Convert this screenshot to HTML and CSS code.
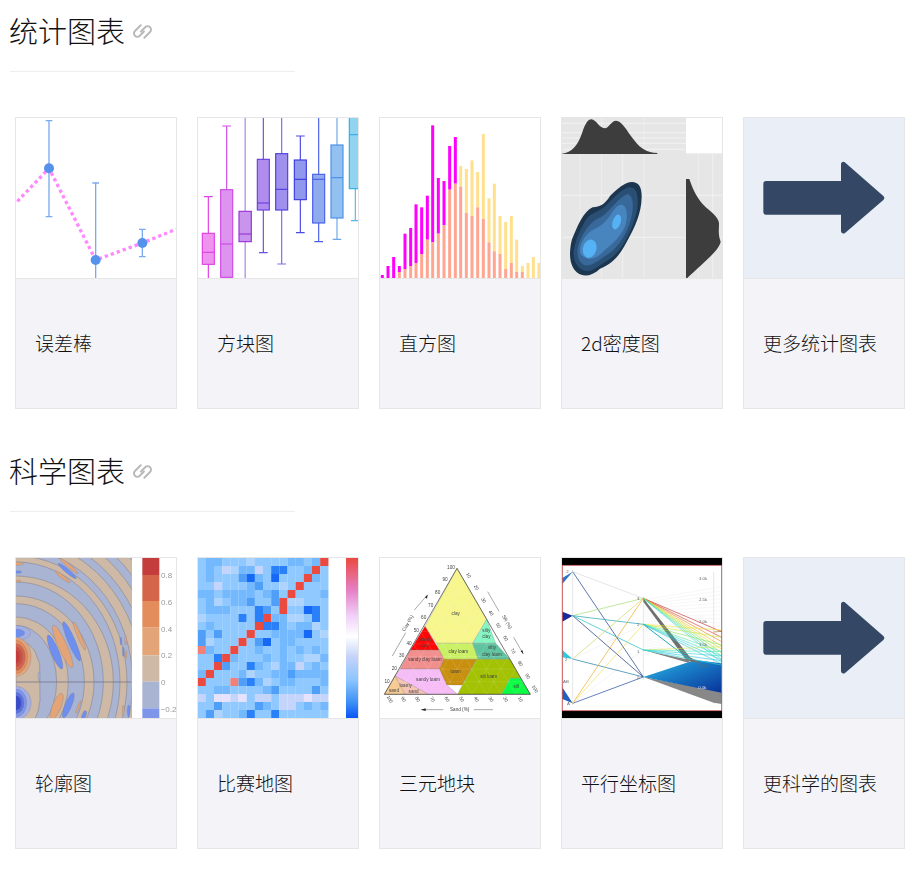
FILE: index.html
```html
<!DOCTYPE html>
<html lang="zh-CN">
<head>
<meta charset="utf-8">
<title>图表</title>
<link rel="stylesheet" href="styles.css">
</head>
<body>
<main class="page">
<section class="section">
  <h2 class="heading"><span class="heading-text">统计图表</span>
    <svg class="link" viewBox="0 0 18 18"><g transform="rotate(-45 9 9)"><path d="M12 3.6H4.3a3.2 3.2 0 0 0 0 6.4H10"/><path d="M8 8H13.7a3.2 3.2 0 0 1 0 6.4H6"/></g></svg>
  </h2>
  <div class="cards">
    <a class="card"><div class="thumb"><svg id="errorbar" viewBox="48 354 480 480">
      <g fill="none" stroke="#7aabf0" stroke-width="4">
        <path d="M147 362V650M137 362H157M137 650H157"/>
        <path d="M287 549V834M277 549H297"/>
        <path d="M427 688V770M417 688H437M417 770H437"/>
      </g>
      <path d="M52 604L147 505L287 780L427 729L528 688" fill="none" stroke="#ff88ff" stroke-width="10" stroke-dasharray="10 9"/>
      <g fill="#5592ec"><circle cx="147" cy="505" r="15"/><circle cx="287" cy="780" r="15"/><circle cx="427" cy="729" r="15"/></g>
    </svg></div><h3 class="label">误差棒</h3></a>
    <a class="card"><div class="thumb"><svg id="boxplot" viewBox="594 354 480 480"></svg></div><h3 class="label">方块图</h3></a>
    <a class="card"><div class="thumb"><svg id="hist" viewBox="30 24 480 480"></svg></div><h3 class="label">直方图</h3></a>
    <a class="card"><div class="thumb"><svg class="soft" viewBox="576 24 480 480">
      <rect x="576" y="24" width="480" height="480" fill="#e6e6e6"/>
      <path d="M576 40H948M576 68H948M576 84H948M576 100H948M576 118H948M576 256H1056M576 382H1056" stroke="#f2f2f2" stroke-width="3"/>
      <path d="M630 130V504M694 24V504M758 130V504M822 24V504M985 130V504M1028 130V504" stroke="#f0f0f0" stroke-width="2.5"/>
      <rect x="948" y="24" width="108" height="106" fill="#fff"/>
      <path d="M576 131C606 128 622 108 636 70C646 40 654 28 664 28C678 28 688 55 704 55C716 55 724 32 738 32C756 32 770 62 792 90C812 116 830 128 862 129V132H576Z" fill="#3d3d3d"/>
      <path d="M948 504V207H958C966 230 976 258 1000 284C1022 306 1046 320 1047 340C1047 362 1044 372 1052 396C1046 420 1010 450 980 478C968 490 958 498 952 504Z" fill="#3d3d3d"/>
      <path d="M786 216C806 216 816 232 815 262C814 310 796 350 770 396C750 434 730 460 690 476C664 500 632 506 612 478C594 452 600 410 606 388C622 350 640 304 668 292C690 290 704 284 720 258C740 238 764 216 786 216Z" fill="#1c3650"/>
      <path d="M780 232C802 232 806 262 802 296C794 340 770 390 748 420C724 450 694 462 668 480C642 490 618 474 612 444C606 410 628 362 650 326C666 306 694 304 712 282C734 262 760 232 780 232Z" fill="#2a4f75"/>
      <path d="M772 252C792 256 792 296 782 330C770 370 750 406 720 428C694 444 668 470 644 466C622 456 616 424 630 392C646 356 666 332 692 322C716 308 746 262 772 252Z" fill="#38699a"/>
      <path d="M754 284C774 286 774 326 764 352C746 392 712 412 692 432C672 452 644 450 632 432C624 410 642 378 664 362C690 350 706 338 722 314C732 298 742 284 754 284Z" fill="#4885bf"/>
      <ellipse cx="659" cy="416" rx="20" ry="28" transform="rotate(15 659 416)" fill="#55b2f4"/>
      <ellipse cx="740" cy="336" rx="12" ry="23" transform="rotate(18 740 336)" fill="#55b2f4"/>
    </svg></div><h3 class="label">2d密度图</h3></a>
    <a class="card card-more"><div class="thumb"><svg viewBox="42 24 480 480">
      <rect x="42" y="24" width="480" height="480" fill="#e9eef7"/>
      <path d="M108 213H333V163C333 156 340 153 346 158L460 258C464 262 464 266 460 270L346 368C340 373 333 370 333 363V314H108C103 314 100 311 100 306V221C100 216 103 213 108 213Z" fill="#344866"/>
    </svg></div><h3 class="label">更多统计图表</h3></a>
  </div>
</section>
<section class="section">
  <h2 class="heading"><span class="heading-text">科学图表</span>
    <svg class="link" viewBox="0 0 18 18"><g transform="rotate(-45 9 9)"><path d="M12 3.6H4.3a3.2 3.2 0 0 0 0 6.4H10"/><path d="M8 8H13.7a3.2 3.2 0 0 1 0 6.4H6"/></g></svg>
  </h2>
  <div class="cards">
    <a class="card"><div class="thumb"><svg id="contour" class="soft" viewBox="48 24 480 480"></svg></div><h3 class="label">轮廓图</h3></a>
    <a class="card"><div class="thumb"><svg id="heatmap" viewBox="594 24 480 480">
      <defs><linearGradient id="scale" x1="0" y1="0" x2="0" y2="1">
        <stop offset="0" stop-color="#ea4a3f"/><stop offset=".2" stop-color="#e67fc6"/><stop offset=".36" stop-color="#f0d0f8"/><stop offset=".49" stop-color="#ffffff"/><stop offset=".62" stop-color="#c4d2fa"/><stop offset=".76" stop-color="#8cc6ff"/><stop offset=".9" stop-color="#3f90f6"/><stop offset="1" stop-color="#0a55f5"/>
      </linearGradient></defs>
      <rect x="1038" y="24" width="36" height="480" fill="url(#scale)"/>
    </svg></div><h3 class="label">比赛地图</h3></a>
    <a class="card"><div class="thumb"><svg id="ternary" class="softer" viewBox="15 24 480 480">
      <g stroke="#77776a" stroke-width=".8">
        <path fill="#f6f68c" d="M246 55L335 208L293 280H185L150 229Z"/>
        <path fill="#ff0505" d="M150 229L193 300H106Z"/>
        <path fill="#c9f163" d="M185 280H293L310 328H207L193 300Z"/>
        <path fill="#86f5c4" d="M335 208L362 280H293Z"/>
        <path fill="#5fc3a0" d="M293 280H362L405 328H310Z"/>
        <path fill="#f18e8e" d="M106 300H193L207 328L193 357H75Z"/>
        <path fill="#c98f0e" d="M207 328H305L262 405H215L193 357Z"/>
        <path fill="#a2c203" d="M305 328H405L437 385H405L380 433H248L262 405Z"/>
        <path fill="#0dfb45" d="M405 385H437L466 433H380Z"/>
        <path fill="#f6bcf6" d="M75 357H193L215 405L248 433H160L60 378Z"/>
        <path fill="#f5c4b4" d="M60 378L160 433H90Z"/>
        <path fill="#f6ca92" d="M60 378L90 433H28Z"/>
      </g>
      <g id="mesh" stroke="#ffffff" stroke-opacity=".35" stroke-width="1"></g>
      <path d="M246 55L466 433H28Z" fill="none" stroke="#333" stroke-width="2"/>
      <g class="tern" text-anchor="middle">
        <text x="242" y="196">clay</text><text x="150" y="273">sandy</text><text x="149" y="292">clay</text>
        <text x="334" y="245">silty</text><text x="334" y="265">clay</text><text x="351" y="298">silty</text><text x="351" y="318">clay loam</text>
        <text x="250" y="308">clay loam</text><text x="150" y="333">sandy clay loam</text><text x="242" y="368">loam</text>
        <text x="341" y="385">silt loam</text><text x="159" y="394">sandy loam</text><text x="424" y="415">silt</text>
        <text x="92" y="412">loamy</text><text x="57" y="427">sand</text><text x="116" y="428">sand</text>
        <text x="228" y="57">100</text><text x="210" y="94">90</text><text x="188" y="133">80</text><text x="167" y="170">70</text><text x="146" y="208">60</text><text x="124" y="246">50</text><text x="102" y="284">40</text><text x="80" y="322">30</text><text x="58" y="360">20</text><text x="36" y="398">10</text>
        <text transform="translate(277 78) rotate(60)">10</text><text transform="translate(300 115) rotate(60)">20</text><text transform="translate(322 153) rotate(60)">30</text><text transform="translate(344 191) rotate(60)">40</text><text transform="translate(366 229) rotate(60)">50</text><text transform="translate(388 267) rotate(60)">60</text><text transform="translate(410 305) rotate(60)">70</text><text transform="translate(432 343) rotate(60)">80</text><text transform="translate(454 381) rotate(60)">90</text><text transform="translate(476 419) rotate(60)">100</text>
        <text transform="translate(40 450) rotate(60)">100</text><text transform="translate(81 450) rotate(60)">90</text><text transform="translate(124 450) rotate(60)">80</text><text transform="translate(168 450) rotate(60)">70</text><text transform="translate(212 450) rotate(60)">60</text><text transform="translate(256 450) rotate(60)">50</text><text transform="translate(300 450) rotate(60)">40</text><text transform="translate(344 450) rotate(60)">30</text><text transform="translate(388 450) rotate(60)">20</text><text transform="translate(432 450) rotate(60)">10</text>
        <text x="254" y="484">Sand (%)</text>
        <text transform="translate(102 222) rotate(-60)">Clay (%)</text><text transform="translate(392 218) rotate(60)">Silt (%)</text>
      </g>
      <g fill="none" stroke="#555" stroke-width="1.5">
        <path d="M138 479H205M296 479H354M52 318L92 248M118 180L158 134M338 125L372 184M416 262L445 312"/>
      </g>
      <path d="M138 479L152 475V483ZM158 134L150 142L156 146ZM445 312L437 304L442 300Z" fill="#222"/>
    </svg></div><h3 class="label">三元地块</h3></a>
    <a class="card"><div class="thumb"><svg id="parallel" class="soft" viewBox="21 24 480 480">
      <defs><linearGradient id="fan" x1="0" y1="0" x2="1" y2="1"><stop offset="0" stop-color="#35c4e4"/><stop offset=".4" stop-color="#1a80c8"/><stop offset="1" stop-color="#08329a"/></linearGradient></defs>
      <rect x="21" y="24" width="480" height="480" fill="#fff"/>
      <g id="para-lines" fill="none"></g>
      <rect x="21" y="24" width="480" height="21" fill="#000"/><rect x="21" y="483" width="480" height="21" fill="#000"/>
      <rect x="22" y="46" width="478" height="436" fill="none" stroke="#c24a4a" stroke-width="2.5"/>
      <g class="para"><text x="34" y="68">2</text><text x="246" y="150">3</text><text x="246" y="228">2</text><text x="246" y="308">1</text><text x="246" y="386">0</text><text x="30" y="334">2</text><text x="24" y="398">AB</text><text x="36" y="464">A</text>
      <text x="432" y="90">3.0k</text><text x="432" y="154">2.5k</text><text x="432" y="220">2.0k</text><text x="432" y="287">1.5k</text><text x="432" y="351">0.0k</text><text class="para-light" x="430" y="417">0.0k</text></g>
    </svg></div><h3 class="label">平行坐标图</h3></a>
    <a class="card card-more"><div class="thumb"><svg viewBox="42 24 480 480">
      <rect x="42" y="24" width="480" height="480" fill="#e9eef7"/>
      <path d="M108 213H333V163C333 156 340 153 346 158L460 258C464 262 464 266 460 270L346 368C340 373 333 370 333 363V314H108C103 314 100 311 100 306V221C100 216 103 213 108 213Z" fill="#344866"/>
    </svg></div><h3 class="label">更科学的图表</h3></a>
  </div>
</section>
</main>
<script src="script.js"></script>
</body>
</html>
```
FILE: styles.css
```css
* { box-sizing: border-box; }
html, body { margin: 0; background: #fff; }
body { font-family: "Noto Sans CJK SC", "Liberation Sans", sans-serif; color: #111; }
.page { padding: 0 10px; }
.section { height: 440px; }
.heading {
  display: flex;
  align-items: center;
  gap: 8px;
  width: 285px;
  height: 72px;
  margin: 0;
  padding-bottom: 11px;
  border-bottom: 1px solid #eee;
  font-size: 29px;
  font-weight: 300;
  line-height: 1;
}
.heading-text { margin-left: -1px; }
.link { width: 19px; height: 19px; margin: 2px 0 0; fill: none; stroke: #b8b8b8; stroke-width: 1.8; stroke-linecap: round; }
.cards { display: flex; gap: 20px; margin: 45px 0 0 5px; }
.card {
  display: flex;
  flex-direction: column;
  flex: 0 0 162px;
  height: 292px;
  border: 1px solid #e6e6e6;
  background: #f3f3f8;
}
.thumb {
  height: 161px;
  overflow: hidden;
  border-bottom: 1px solid #e6e6e6;
  background: #fff;
}
.thumb svg { display: block; width: 160px; height: 160px; }
.soft { filter: blur(.35px); }
.softer { filter: blur(.55px); }
.label {
  display: flex;
  align-items: center;
  flex: 1;
  margin: 0;
  padding: 0 0 2px 19px;
  font-size: 19px;
  font-weight: 300;
  line-height: 1;
}
.tern text { font: 14px "Liberation Sans", sans-serif; fill: #444; }
.para text { font: 13px "Liberation Sans", sans-serif; fill: #666; }
.para .para-light { fill: #e8e8ff; }
.cb-label { font: 24px "Liberation Sans", sans-serif; fill: #999; }
```
FILE: script.js
```js
const NS = 'http://www.w3.org/2000/svg';
function add(parent, tag, attrs, text) {
  const e = document.createElementNS(NS, tag);
  for (const k in attrs) e.setAttribute(k, attrs[k]);
  if (text) e.textContent = text;
  parent.appendChild(e);
  return e;
}

/* box plot */
(function () {
  const svg = document.getElementById('boxplot');
  const boxes = [
    [607, 643, 700, 793, 757, 590, 840, '#e040e4', '#ee94ee', '#e040e4'],
    [662, 698, 569, 832, 732, 378, 840, '#d04ae6', '#dc94ee', '#d04ae6'],
    [717, 754, 634, 725, 702, 340, 840, '#9a34d8', '#c894ec', '#ac80ea'],
    [772, 808, 478, 630, 609, 340, 758, '#6a40e0', '#b08cee', '#6a50e0'],
    [827, 863, 461, 630, 568, 340, 792, '#5040e0', '#a090ee', '#7a70ea'],
    [883, 919, 480, 599, 538, 408, 698, '#3c3ce0', '#9098ee', '#4a4ae4'],
    [938, 974, 523, 669, 538, 340, 725, '#4a60e8', '#90aaee', '#4a60e8'],
    [993, 1029, 435, 654, 533, 340, 718, '#4a90e8', '#92c0f0', '#6aa8ec'],
    [1048, 1084, 340, 566, 404, 340, 662, '#30b0e8', '#90d4f0', '#50bcec']
  ];
  boxes.forEach(function (b) {
    const cx = (b[0] + b[1]) / 2;
    add(svg, 'path', { d: `M${cx} ${b[5]}V${b[6]}M${cx - 13} ${b[5]}H${cx + 13}M${cx - 13} ${b[6]}H${cx + 13}`, stroke: b[9], 'stroke-width': 3.5, fill: 'none' });
    add(svg, 'rect', { x: b[0], y: b[2], width: b[1] - b[0], height: b[3] - b[2], fill: b[8], stroke: b[7], 'stroke-width': 3.5 });
    add(svg, 'path', { d: `M${b[0]} ${b[4]}H${b[1]}`, stroke: b[7], 'stroke-width': 3.5 });
  });
})();

/* histogram: x, magenta top, overlap top, yellow top */
(function () {
  const svg = document.getElementById('hist');
  const bottom = 504;
  const rows = [
    [37, 495, 0, 0], [54, 468, 0, 0], [71, 441, 0, 0], [88, 468, 486, 0], [105, 371, 477, 0],
    [122, 354, 468, 0], [138, 283, 459, 0], [155, 292, 432, 0], [172, 257, 389, 0], [188, 46, 397, 0],
    [205, 204, 371, 0], [222, 213, 345, 0], [239, 108, 239, 0], [256, 81, 221, 0],
    [272, 0, 230, 168], [289, 0, 309, 177], [306, 0, 318, 151], [323, 0, 292, 186], [340, 0, 327, 72],
    [357, 0, 397, 265], [373, 0, 424, 221], [390, 0, 432, 318], [407, 0, 477, 336], [424, 0, 459, 318],
    [440, 0, 486, 389], [457, 0, 486, 468], [474, 0, 0, 459], [490, 0, 0, 441], [507, 0, 0, 459]
  ];
  rows.forEach(function (r) {
    const bar = function (top, end, fill) {
      add(svg, 'rect', { x: r[0] - 4.5, y: top, width: 9, height: end - top, fill: fill });
    };
    const low = r[2] || bottom;
    if (r[1]) bar(r[1], low, '#ff00ff');
    if (r[3]) bar(r[3], low, '#ffe08c');
    if (r[2]) bar(r[2], bottom, '#ffa693');
  });
})();

/* contour */
(function () {
  const svg = document.getElementById('contour');
  const defs = add(svg, 'defs', {});
  add(add(defs, 'clipPath', { id: 'plot' }), 'rect', { x: 3, y: 3, width: 347, height: 480 });
  const BLUE = '#a9b3d2', TAN = '#cdb9a5', LINE = '#77788a';
  add(svg, 'rect', { x: 48, y: 24, width: 480, height: 480, fill: '#fff' });
  const outer = add(svg, 'g', { transform: 'translate(45 21)' });
  const p = add(outer, 'g', { 'clip-path': 'url(#plot)' });
  add(p, 'rect', { x: 3, y: 3, width: 347, height: 480, fill: BLUE });
  /* outermost first: each ellipse paints the band between itself and the next */
  const rings = [[560, 610, BLUE], [533, 585, TAN], [505, 555, BLUE], [480, 530, TAN], [452, 502, BLUE], [428, 478, TAN],
    [400, 450, BLUE], [378, 428, TAN], [350, 400, BLUE], [333, 378, TAN], [312, 360, BLUE], [292, 318, TAN], [262, 300, BLUE],
    [234, 258, TAN], [205, 235, BLUE], [157, 195, TAN], [122, 170, BLUE]];
  rings.forEach(function (r) {
    add(p, 'ellipse', { cx: 3, cy: 375, rx: r[0], ry: r[1], fill: r[2], stroke: LINE, 'stroke-width': 1.4 });
  });
  add(p, 'path', { d: 'M3 250C30 250 60 270 66 300L74 320L75 430L70 460L60 485H3Z', fill: TAN, stroke: LINE, 'stroke-width': 1.4 });
  [[120, 285, 12, 55, -22, '#6e8ff0'], [143, 268, 13, 70, -24, '#e3a478'], [170, 253, 11, 64, -23, '#6e8ff0'], [193, 237, 6, 46, -23, '#e3a478'],
   [162, 27, 5, 35, -50, '#e3a478'], [157, 42, 6, 35, -50, '#6e8ff0'], [143, 60, 5, 27, -52, '#e3a478'],
   [3, 228, 44, 22, 0, '#a3aee4'], [3, 228, 26, 12, 0, '#6e8ff0'], [3, 20, 22, 5, 0, '#e3a478'], [3, 45, 17, 4, 0, '#6e8ff0'], [3, 72, 15, 3, 0, '#e3a478'],
   [125, 448, 13, 42, 22, '#e3a478'], [160, 445, 10, 40, 22, '#6e8ff0'], [190, 450, 3, 20, 20, '#e3a478'], [207, 475, 6, 15, 20, '#6e8ff0'],
   [318, 252, 2.5, 12, 0, '#6e8ff0'], [332, 250, 3, 14, 0, '#e3a478'], [325, 285, 2.5, 14, 0, '#6e8ff0'], [333, 292, 2.5, 12, 0, '#e3a478'],
   [325, 460, 3, 16, 0, '#e3a478'], [341, 462, 4, 18, 0, '#6e8ff0'], [72, 358, 2.5, 14, 0, '#a9b3d2']
  ].forEach(function (e) {
    add(p, 'ellipse', { cx: e[0], cy: e[1], rx: e[2], ry: e[3], fill: e[5], stroke: LINE, 'stroke-width': .8, transform: `rotate(${e[4]} ${e[0]} ${e[1]})` });
  });
  [[45, 58, '#e3a478'], [35, 50, '#e38d5d'], [28, 40, '#d4644a'], [20, 30, '#cf4f40'], [12, 20, '#c43c3c']].forEach(function (c) {
    add(p, 'ellipse', { cx: 3, cy: 300, rx: c[0], ry: c[1], fill: c[2], stroke: LINE, 'stroke-width': .8 });
  });
  [[45, 50, '#a3aee4'], [32, 42, '#7f95ea'], [24, 32, '#5a72e0'], [16, 22, '#3a4cc8']].forEach(function (c) {
    add(p, 'ellipse', { cx: 3, cy: 438, rx: c[0], ry: c[1], fill: c[2], stroke: LINE, 'stroke-width': .8 });
  });
  add(p, 'path', { d: 'M3 375H350', stroke: LINE, 'stroke-width': 2.5 });
  [[24, 75, '#c43c3c'], [75, 153, '#d4644a'], [153, 233, '#e38d5d'], [233, 316, '#e3a578'], [316, 395, '#cdb9a5'], [395, 475, '#a9b3d2'], [475, 504, '#7f95ea']].forEach(function (s) {
    add(svg, 'rect', { x: 427, y: s[0], width: 51, height: s[1] - s[0], fill: s[2] });
  });
  [['0.8', 85], ['0.6', 165], ['0.4', 245], ['0.2', 325], ['0', 405], ['−0.2', 486]].forEach(function (t) {
    add(svg, 'text', { x: t[0].length > 3 ? 482 : 483, y: t[1], class: 'cb-label' }, t[0]);
  });
})();

/* heatmap */
(function () {
  const svg = document.getElementById('heatmap');
  const colors = { a: '#8fc9ff', b: '#74b8fd', c: '#4f9ff9', d: '#1668f6', s: '#2a80f8', e: '#c4d4fb', f: '#e6e2fd', g: '#aed4fe', r: '#ea4a3f', o: '#f0807a' };
  const grid = [
    'abbaaagaaaabbabr',
    'abaegbbeassaabra',
    'abaaacdbadaaarba',
    'aaeaaabcaagaraaa',
    'bbabbbbabcaraaab',
    'abgabbcaacrggaaa',
    'abbbaaascaraadsa',
    'gaaaasasrbbggasa',
    'abaaaaarssbabbga',
    'cacaaaraabbbbdag',
    'cgaaaracdabbaaaa',
    'obaaraabaabababa',
    'aasrbaaababaaggb',
    'aarcaasbagbbeaba',
    'braaabgaabbcbbbb',
    'raaaocsbgabbaaab',
    'aabbaaaabcaaaaca',
    'eaffefaeeaeeefee',
    'aacaaaacbaeeabab',
    'acgaabsaasaaaaaa'
  ];
  const w = 392 / 16, h = 24;
  grid.forEach(function (row, y) {
    row.split('').forEach(function (c, x) {
      add(svg, 'rect', { x: 593 + x * w, y: 24 + y * h, width: w + .3, height: h + .3, fill: colors[c] });
    });
  });
})();

/* ternary mesh */
(function () {
  const g = document.getElementById('mesh');
  const T = [246, 55], L = [28, 433], R = [466, 433];
  const lerp = function (a, b, t) { return [a[0] + (b[0] - a[0]) * t, a[1] + (b[1] - a[1]) * t]; };
  for (let i = 1; i < 10; i++) {
    const t = i / 10;
    [[lerp(T, L, t), lerp(T, R, t)], [lerp(L, T, t), lerp(L, R, t)], [lerp(R, T, t), lerp(R, L, t)]].forEach(function (p) {
      add(g, 'path', { d: `M${p[0][0]} ${p[0][1]}L${p[1][0]} ${p[1][1]}` });
    });
  }
})();

/* parallel coordinates */
(function () {
  const g = document.getElementById('para-lines');
  const ln = function (x1, y1, x2, y2, c, w, o) {
    add(g, 'path', { d: `M${x1} ${y1}L${x2} ${y2}`, stroke: c, 'stroke-width': w || 1.5, 'stroke-opacity': o || 1 });
  };
  ln(53, 60, 53, 465, '#d0d0d0', 1.5); ln(265, 140, 265, 390, '#d0d0d0', 1.5); ln(476, 65, 476, 460, '#d0d0d0', 1.5);
  for (let i = 0; i < 22; i++) {
    ln(265, 150 + i * 7, 500, 110 + i * 12, '#ececec', 1.2);
  }
  ln(53, 197, 265, 300, '#dddddd', 1); ln(53, 327, 265, 223, '#dddddd', 1); ln(53, 460, 265, 300, '#dddddd', 1);
  add(g, 'path', { d: 'M22 102L53 65L22 84Z', fill: '#2a78c8' });
  add(g, 'path', { d: 'M22 185L53 197L22 215Z', fill: '#1a2a9a' });
  add(g, 'path', { d: 'M22 300L53 327L22 322Z', fill: '#30c8d8' });
  add(g, 'path', { d: 'M22 412L53 460L22 447Z', fill: '#2060c0' });
  ln(53, 65, 265, 381, '#24468a', 2.2); ln(53, 197, 265, 381, '#1c3a80', 2.2); ln(53, 460, 265, 381, '#2a52a4', 2.2);
  ln(53, 327, 265, 381, '#2a80a8', 2.2); ln(53, 197, 265, 145, '#a8e080', 2.2); ln(53, 197, 265, 223, '#28a8c0', 2.2);
  ln(53, 197, 265, 300, '#30c8d0', 2.2); ln(53, 327, 265, 145, '#d0d870', 2.2); ln(53, 460, 265, 145, '#f0b030', 2.2);
  ln(53, 460, 265, 223, '#f0e060', 2.2); ln(53, 65, 265, 145, '#d4d4d4', 1.8);
  add(g, 'path', { d: 'M265 381L500 425V462L476 458Z', fill: '#888888' });
  add(g, 'path', { d: 'M265 381L420 330L500 340V428Z', fill: 'url(#fan)' });
  add(g, 'path', { d: 'M265 145L405 322L440 340L395 332L265 155Z', fill: '#707070' });
  add(g, 'path', { d: 'M265 300L405 330L400 338Z', fill: '#808080' });
  const c3 = [[245, '#c02020'], [262, '#d83020'], [275, '#e88020'], [288, '#f0c020'], [298, '#d8e030'], [308, '#a0e040'], [318, '#60e080'], [328, '#40e0b0'], [338, '#30d8d8']];
  c3.forEach(function (c) { ln(265, 145, 500, c[0], c[1], 1.8); });
  [[240, '#f0e030'], [262, '#c8e840'], [285, '#80e860'], [305, '#50e8a0'], [318, '#30e0d0'], [330, '#28d0e8'], [342, '#30c8d8']].forEach(function (c) { ln(265, 223, 500, c[0], c[1], 1.8); });
  ln(265, 223, 405, 330, '#28a8b8', 3);
  [[290, '#d0e850'], [305, '#50e0c0'], [318, '#30d8d8'], [332, '#28c8e0'], [345, '#30d8d8']].forEach(function (c) { ln(265, 300, 500, c[0], c[1], 1.8); });
  ln(476, 246, 500, 244, '#a06020', 1.8);
})();
```
